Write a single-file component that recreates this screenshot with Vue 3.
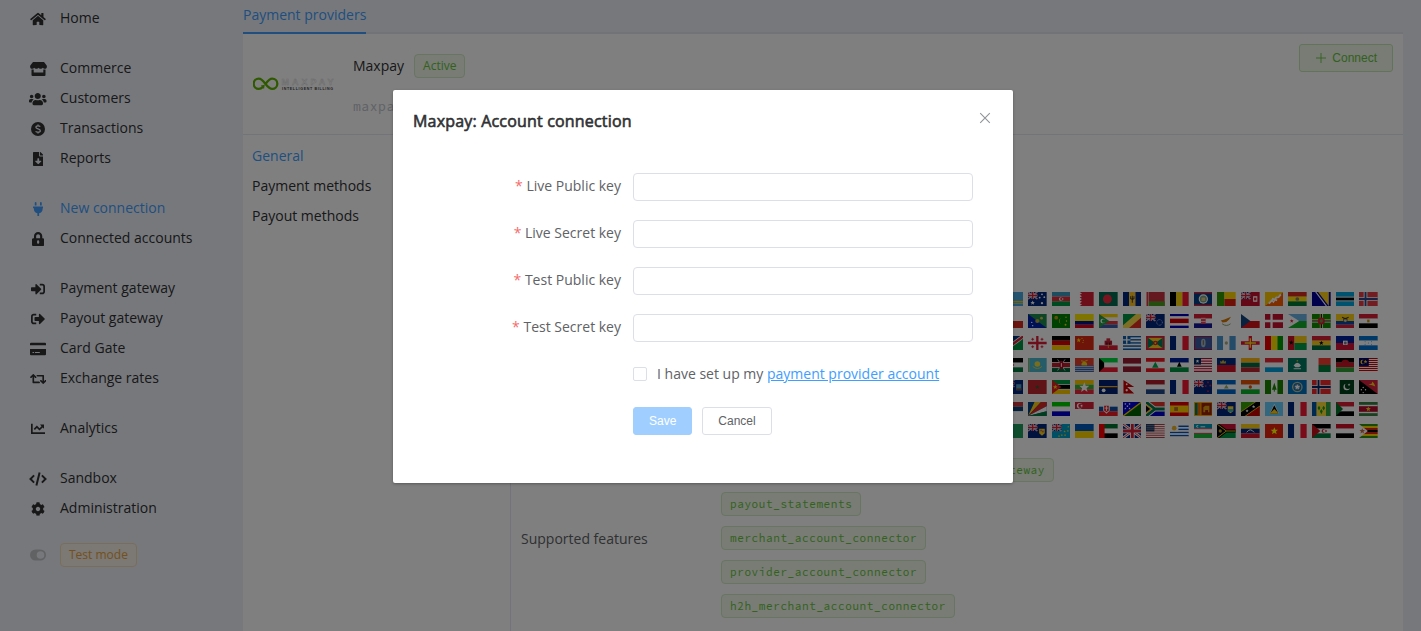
<script setup>
const icons = {
  home: { w: 16, vb: '0 0 576 512', b: '<path d="M280.37 148.26L96 300.11V464a16 16 0 0 0 16 16l112.06-.29a16 16 0 0 0 15.92-16V368a16 16 0 0 1 16-16h64a16 16 0 0 1 16 16v95.64a16 16 0 0 0 16 16.05L464 480a16 16 0 0 0 16-16V300L295.67 148.26a12.19 12.19 0 0 0-15.3 0zM571.6 251.47L488 182.56V44.05a12 12 0 0 0-12-12h-56a12 12 0 0 0-12 12v72.61L318.47 43a48 48 0 0 0-61 0L4.34 251.47a12 12 0 0 0-1.6 16.9l25.5 31A12 12 0 0 0 45.15 301l235.22-193.74a12.19 12.19 0 0 1 15.3 0L530.9 301a12 12 0 0 0 16.9-1.6l25.5-31a12 12 0 0 0-1.7-16.93z"/>' },
  store: { w: 17, vb: '0 0 17 14', b: '<path d="M3 0h11l2.7 3.6c.6 1.500-.2 3.200-1.700 3.200-1.100 0-1.600-.6-2.200-1.100-.6.6-1.200 1.100-2.200 1.100S9.100 6.200 8.500 5.700C7.900 6.200 7.400 6.800 6.400 6.800S4.800 6.300 4.200 5.700C3.600 6.200 3.100 6.800 2 6.800.5 6.800-.3 5.100.3 3.600zM1.500 7.500h2.200v3h9.600v-3h2.200V13a1 1 0 0 1-1 1h-12a1 1 0 0 1-1-1z"/>' },
  users: { w: 17.5, vb: '0 0 640 512', b: '<path d="M96 224c35.3 0 64-28.7 64-64s-28.700-64-64-64-64 28.700-64 64 28.700 64 64 64zm448 0c35.300 0 64-28.700 64-64s-28.700-64-64-64-64 28.700-64 64 28.700 64 64 64zm32 32h-64c-17.600 0-33.500 7.100-45.100 18.600 40.300 22.100 68.900 62 75.100 109.400h66c17.700 0 32-14.300 32-32v-32c0-35.300-28.700-64-64-64zm-256 0c61.900 0 112-50.100 112-112S381.900 32 320 32 208 82.100 208 144s50.100 112 112 112zm76.800 32h-8.300c-20.800 10-43.900 16-68.500 16s-47.600-6-68.500-16h-8.300C179.600 288 128 339.600 128 403.200V432c0 26.500 21.500 48 48 48h288c26.500 0 48-21.500 48-48v-28.800c0-63.600-51.600-115.200-115.200-115.200zm-223.700-13.400C161.500 263.100 145.600 256 128 256H64c-35.300 0-64 28.700-64 64v32c0 17.700 14.300 32 32 32h65.900c6.300-47.400 34.900-87.300 75.200-109.400z"/>' },
  coin: { w: 14, vb: '0 0 14 14', b: '<circle cx="7" cy="7" r="7"/><path d="M9.200 4.700C8.700 4 8 3.900 7 3.900c-1.300 0-2.100.5-2.100 1.400C4.900 7.300 9.300 6.500 9.300 8.700c0 .9-.9 1.500-2.300 1.500-1.100 0-1.900-.3-2.400-.9M7 2.500V4M7 10v1.500" fill="none" stroke="#eff1f8" stroke-width="1.300"/>' },
  file: { w: 10.5, vb: '0 0 384 512', b: '<path d="M224 136V0H24C10.700 0 0 10.700 0 24v464c0 13.300 10.700 24 24 24h336c13.300 0 24-10.700 24-24V160H248c-13.200 0-24-10.800-24-24zm76.450 211.360l-96.420 95.700c-6.650 6.610-17.390 6.610-24.040 0l-96.420-95.700C73.420 337.290 80.540 320 94.820 320H160v-80c0-8.840 7.160-16 16-16h32c8.840 0 16 7.160 16 16v80h65.180c14.280 0 21.400 17.290 11.270 27.360zM377 105L279.100 7c-4.500-4.500-10.600-7-17-7H256v128h128v-6.100c0-6.300-2.500-12.400-7-16.900z"/>' },
  plug: { w: 10.5, vb: '0 0 384 512', b: '<path d="M320 32a32 32 0 0 0-64 0v96h64zm48 128H16A16 16 0 0 0 0 176v32a16 16 0 0 0 16 16h16v32a160.070 160.070 0 0 0 128 156.800V512h64v-99.200A160.070 160.070 0 0 0 352 256v-32h16a16 16 0 0 0 16-16v-32a16 16 0 0 0-16-16zM128 32a32 32 0 0 0-64 0v96h64z"/>' },
  lock: { w: 12.25, vb: '0 0 448 512', b: '<path fill-rule="evenodd" d="M400 224h-24v-72C376 68.200 307.800 0 224 0S72 68.200 72 152v72H48c-26.500 0-48 21.500-48 48v192c0 26.500 21.500 48 48 48h352c26.500 0 48-21.500 48-48V272c0-26.500-21.500-48-48-48zM296 224H152v-72c0-39.700 32.300-72 72-72s72 32.300 72 72zM264 392a40 40 0 0 1-80 0v-48a40 40 0 0 1 80 0z"/>' },
  signin: { w: 14, vb: '0 0 512 512', b: '<path d="M416 448h-84c-6.600 0-12-5.400-12-12v-40c0-6.600 5.400-12 12-12h84c17.700 0 32-14.300 32-32V160c0-17.700-14.300-32-32-32h-84c-6.600 0-12-5.400-12-12V76c0-6.600 5.400-12 12-12h84c53 0 96 43 96 96v192c0 53-43 96-96 96zm-47-201L201 79c-15-15-41-4.500-41 17v96H24c-13.300 0-24 10.700-24 24v96c0 13.300 10.700 24 24 24h136v96c0 21.500 26 32 41 17l168-168c9.300-9.400 9.300-24.600 0-34z"/>' },
  signout: { w: 14, vb: '0 0 512 512', b: '<path d="M497 273L329 441c-15 15-41 4.500-41-17v-96H152c-13.300 0-24-10.700-24-24v-96c0-13.300 10.700-24 24-24h136V88c0-21.400 25.900-32 41-17l168 168c9.300 9.400 9.300 24.600 0 34zM192 436v-40c0-6.600-5.400-12-12-12H96c-17.700 0-32-14.300-32-32V160c0-17.700 14.300-32 32-32h84c6.600 0 12-5.400 12-12V76c0-6.600-5.400-12-12-12H96c-53 0-96 43-96 96v192c0 53 43 96 96 96h84c6.600 0 12-5.400 12-12z"/>' },
  card: { w: 16, vb: '0 0 16 14', b: '<path fill-rule="evenodd" d="M1 .7h14a1 1 0 0 1 1 1v1.600H0V1.700a1 1 0 0 1 1-1zM0 7h16v5.300a1 1 0 0 1-1 1H1a1 1 0 0 1-1-1zM2.500 10v1h1.600v-1zM5 10v1h4.800v-1z"/>' },
  retweet: { w: 16.5, vb: '0 0 640 512', b: '<path d="M629.657 343.598L528.971 444.284c-9.373 9.372-24.568 9.372-33.941 0L394.343 343.598c-9.373-9.373-9.373-24.569 0-33.941l10.823-10.823c9.562-9.562 25.133-9.340 34.419.492L480 342.118V160H292.451a24.005 24.005 0 0 1-16.971-7.029l-16-16C244.361 121.851 255.069 96 276.451 96H520c13.255 0 24 10.745 24 24v222.118l40.416-42.792c9.285-9.831 24.856-10.054 34.419-.492l10.823 10.823c9.372 9.372 9.372 24.569-.001 33.941zm-265.138 15.431A23.999 23.999 0 0 0 347.548 352H160V169.881l40.416 42.792c9.286 9.831 24.856 10.054 34.419.491l10.822-10.822c9.373-9.373 9.373-24.569 0-33.941L144.971 67.716c-9.373-9.373-24.569-9.373-33.941 0L10.343 168.402c-9.373 9.373-9.373 24.569 0 33.941l10.822 10.822c9.562 9.562 25.133 9.340 34.419-.491L96 169.881V392c0 13.255 10.745 24 24 24h243.549c21.382 0 32.090-25.851 16.970-40.971l-16-16z"/>' },
  chart: { w: 14, vb: '0 0 14 14', b: '<path d="M0 1.700h1.700v8.600H14V12H0zM13 2.600v4.100l-1.300-1.300-3.200 3.200-2.600-2.600-2 2-1.200-1.200 3.200-3.200 2.600 2.600 2-2L9 2.600z"/>' },
  code: { w: 18, vb: '0 0 18 14', b: '<path d="M5.100 3.400L1.500 7l3.600 3.600M12.900 3.400L16.500 7l-3.600 3.600M10.600.4L7.400 13.600" fill="none" stroke="currentColor" stroke-width="2"/>' },
  cog: { w: 14, vb: '0 0 512 512', b: '<path d="M487.400 315.700l-42.600-24.600c4.300-23.200 4.300-47 0-70.200l42.600-24.600c4.900-2.800 7.100-8.600 5.500-14-11.100-35.600-30-67.800-54.700-94.600-3.800-4.100-10-5.100-14.800-2.300L380.800 110c-17.900-15.400-38.500-27.300-60.800-35.100V25.800c0-5.600-3.900-10.500-9.400-11.700-36.700-8.200-74.300-7.800-109.200 0-5.500 1.200-9.400 6.100-9.400 11.700V75c-22.200 7.900-42.800 19.800-60.800 35.100L88.700 85.500c-4.900-2.800-11-1.900-14.800 2.300-24.700 26.700-43.600 58.900-54.700 94.600-1.700 5.400.6 11.200 5.500 14L67.300 221c-4.300 23.200-4.300 47 0 70.200l-42.600 24.600c-4.900 2.800-7.100 8.600-5.500 14 11.100 35.600 30 67.800 54.700 94.600 3.800 4.100 10 5.100 14.800 2.300l42.600-24.600c17.900 15.400 38.500 27.300 60.800 35.100v49.200c0 5.600 3.900 10.500 9.400 11.700 36.700 8.200 74.300 7.800 109.200 0 5.500-1.200 9.400-6.100 9.400-11.700v-49.200c22.200-7.900 42.800-19.800 60.800-35.100l42.600 24.600c4.900 2.800 11 1.900 14.800-2.300 24.700-26.700 43.600-58.900 54.700-94.600 1.500-5.500-.7-11.300-5.600-14.100zM256 336c-44.100 0-80-35.900-80-80s35.900-80 80-80 80 35.900 80 80-35.900 80-80 80z"/>' },
}

const menu = [
  [['home', 'Home']],
  [['store', 'Commerce'], ['users', 'Customers'], ['coin', 'Transactions'], ['file', 'Reports']],
  [['plug', 'New connection', true], ['lock', 'Connected accounts']],
  [['signin', 'Payment gateway'], ['signout', 'Payout gateway'], ['card', 'Card Gate'], ['retweet', 'Exchange rates']],
  [['chart', 'Analytics']],
  [['code', 'Sandbox'], ['cog', 'Administration']],
]

// Flag drawing helpers, on a 40x30 canvas
const r = (x, y, w, h, c) => `<rect x="${x}" y="${y}" width="${w}" height="${h}" fill="${c}"/>`
const o = (x, y, q, c) => `<circle cx="${x}" cy="${y}" r="${q}" fill="${c}"/>`
const p = (d, c) => `<path d="${d}" fill="${c}"/>`
const l = (d, c, w) => `<path d="${d}" stroke="${c}" stroke-width="${w}" fill="none"/>`
const bg = (c) => r(0, 0, 40, 30, c)
const h = (...cs) => cs.map((c, i) => r(0, (i * 30) / cs.length, 40, 30 / cs.length, c)).join('')
const v = (...cs) => cs.map((c, i) => r((i * 40) / cs.length, 0, 40 / cs.length, 30, c)).join('')
const tri = (c, x = 18) => p(`M0 0L${x} 15L0 30z`, c)
const star = (x, y, s, c) => p(`M${x} ${y - s}l${s * 0.28} ${s * 0.65}h${s * 0.7}l${-s * 0.55} ${s * 0.5}l${s * 0.2} ${s * 0.75}l${-s * 0.63} ${-s * 0.45}l${-s * 0.63} ${s * 0.45}l${s * 0.2} ${-s * 0.75}l${-s * 0.55} ${-s * 0.5}h${s * 0.7}z`, c)
const W = '#fff', R = '#d81e34', G = '#009543', Y = '#fcd116', K = '#000', N = '#00247d'
const jack = (s = 0.5) => `<g transform="scale(${s})">${bg(N)}${l('M0 0L40 30M40 0L0 30', W, 6)}${l('M0 0L40 30M40 0L0 30', R, 2)}${l('M20 0V30M0 15H40', W, 10)}${l('M20 0V30M0 15H40', R, 6)}</g>`
const cross = (b, c1, c2) => bg(b) + l('M14 0V30M0 15H40', c1, c2 ? 8 : 5) + (c2 ? l('M14 0V30M0 15H40', c2, 4) : '')
const fr = v('#00267f', W, '#f31830')

const flags = [
  // row 1
  bg('#4aa8e0') + r(0, 19, 40, 2, Y) + r(0, 23, 40, 2, Y),
  bg(N) + jack() + star(10, 23, 5, W) + o(30, 5, 2, W) + o(25, 12, 2, W) + o(35, 11, 2, W) + o(30, 24, 2.500, W),
  h('#3f9bc1', '#ed2939', G) + o(19, 15, 4, W) + o(20.500, 15, 3, '#ed2939') + o(23, 15, 1.500, W),
  bg(R) + p('M0 0H10L15 3L10 6L15 9L10 12L15 15L10 18L15 21L10 24L15 27L10 30H0z', W),
  bg('#006a4e') + o(18, 15, 9.500, '#f42a41'),
  v('#00267f', '#ffc726', '#00267f') + l('M20 8V23M16.500 9V15H23.500V9', K, 1.500),
  bg('#c8313e') + r(0, 20, 40, 10, '#4a9b20') + r(0, 0, 6, 30, '#e9aaa5') + l('M3 0V30', R, 2),
  v(K, '#ffd90c', '#f31830'),
  bg('#003f87') + r(0, 0, 40, 3, R) + r(0, 27, 40, 3, R) + o(20, 15, 10, W) + o(20, 15, 7.500, '#7ba68b') + r(16, 12, 8, 7, '#e9c988'),
  r(0, 0, 16, 30, '#319400') + r(16, 0, 24, 15, '#ffd600') + r(16, 15, 24, 15, '#de2110'),
  bg('#c8102e') + jack() + r(26, 9, 9, 12, W) + r(28, 12, 5, 6, R),
  bg('#ff5d00') + p('M0 0H40L0 30z', '#ffc800') + l('M8 25L15 18L18 21L24 12L29 11L34 5M15 14L26 18', W, 4),
  h('#d52b1e', '#ffe000', '#007934') + o(20, 15, 4, '#83805a'),
  bg('#000099') + p('M13 0H36V30z', Y) + l('M8 0L31 30', W, 2.500),
  bg('#00a4dc') + r(0, 10, 40, 10, W) + r(0, 12, 40, 6, K),
  cross('#e43b43', W, '#28468c'),
  // row 2
  r(0, 0, 40, 15, W) + r(0, 15, 40, 15, '#d52b1e') + r(0, 0, 15, 15, '#0039a6'),
  bg('#1d8a4c') + p('M0 0L40 30H0z', '#0021ad') + o(20, 15, 4.500, '#b9a63b') + o(29, 9, 3, '#d9c14a') + o(8, 18, 1.500, W) + o(10, 25, 1.500, W),
  bg('#008000') + o(9, 8, 4, '#c59b22') + p('M21 9a6 6 0 1 0 0 12a4 5 0 1 1 0-12', Y) + o(31, 15, 1.500, Y) + o(29, 23, 2, Y) + o(30, 7, 1.500, Y),
  r(0, 0, 40, 15, '#ffe800') + r(0, 15, 40, 8, '#00148e') + r(0, 23, 40, 7, '#da0010'),
  h('#ffd400', W, '#e2383f', '#3b5aa8') + tri('#239e46', 22) + o(8, 15, 5, W) + o(10, 15, 4, '#239e46'),
  bg('#fbde4a') + p('M0 0H28L0 24z', '#009543') + p('M40 7V30H13z', '#e0301f'),
  bg(N) + jack() + `<circle cx="29" cy="18" r="6" fill="none" stroke="#fff" stroke-width="1.500" stroke-dasharray="1.500"/>`,
  h('#0000b4', W, '#d90000', '#d90000', W, '#0000b4'),
  h(R, W, '#171796') + r(15, 7, 10, 14, '#e44350') + l('M15 10H25M15 16H25', W, 1.500),
  bg(W) + p('M8 14L16 12L30 6L26 12L20 17L12 18z', '#d57800') + l('M11 21Q20 28 29 21', '#7c9b65', 2),
  h(W, '#d7141a') + tri('#11457e', 20),
  cross('#c8102e', W),
  h('#6ab2e7', '#12ad2b') + tri(W, 24) + star(8, 15, 4, R),
  bg('#108c00') + l('M20 0V30M0 15H40', W, 6) + l('M18 0V30M0 13H40', Y, 2) + l('M20 0V30M0 15H40', K, 2.500) + o(20, 15, 7.500, R) + o(20, 15, 3.500, '#5c9b42'),
  r(0, 0, 40, 15, Y) + r(0, 15, 40, 8, '#0748ae') + r(0, 23, 40, 7, R) + o(20, 13, 5, '#75552f') + o(20, 14, 3, '#bdd2bf') + l('M13 7L20 10L27 7', '#43331e', 2.500),
  h(R, W, K) + r(17.500, 12, 5, 6, '#c09300'),
  // row 3
  bg('#009543') + p('M0 0H34L0 25z', '#003580') + p('M40 0H33L0 25V30H7L40 5z', W) + p('M40 0H36L0 27V30H4L40 3z', R),
  bg(W) + l('M20 0V30M0 15H40', R, 5) + l('M10 4V10M7 7H13M30 4V10M27 7H33M10 20V26M7 23H13M30 20V26M27 23H33', R, 2),
  h(K, '#dd0000', '#ffce00'),
  bg('#de2910') + star(8, 9, 5, '#ffde00') + o(15, 5, 1.200, Y) + o(18, 9, 1.200, Y) + o(17, 14, 1.200, Y),
  r(0, 0, 40, 20, W) + r(0, 20, 40, 10, R) + r(12, 10, 16, 9, '#b91d30') + r(16, 5, 8, 6, '#c8283b') + l('M20 19V26', '#dfaa20', 2) + l('M17 14V19M23 14V19', K, 1.500),
  [0, 1, 2, 3, 4, 5, 6, 7, 8].map((i) => r(0, (i * 30) / 9, 40, 3.400, i % 2 ? W : '#0d5eaf')).join('') + r(0, 0, 16, 16.600, '#0d5eaf') + l('M8 0V16.600M0 8.300H16', W, 3),
  bg(R) + r(4, 4, 32, 22, Y) + p('M4 4V26L20 15zM36 4V26L20 15z', '#007a5e') + o(20, 15, 5, R) + star(20, 15, 3, Y),
  fr,
  bg('#be0027') + r(1.500, 1.500, 37, 27, '#3b5aa3') + `<ellipse cx="20" cy="15" rx="5" ry="9" fill="#9fb8c6"/>` + l('M20 9V19', '#7c5a42', 2),
  v('#4997d0', W, '#4997d0') + o(20, 15, 3.500, '#a9ad83'),
  bg(W) + l('M20 0V30M0 15H40', '#e8112d', 7) + l('M20 5V25M8 15H32', '#f9dd16', 3),
  v('#e90000', '#ffe000', '#009a00'),
  r(0, 0, 14, 30, '#ce1126') + r(14, 0, 26, 15, Y) + r(14, 15, 26, 15, '#009e49') + star(7, 14, 5, K),
  h(R, Y, '#006b3f') + star(20, 15, 5, K),
  h('#00209f', '#d21034') + r(15, 10, 10, 9, W) + o(20, 15, 3, '#777c8b'),
  h('#0073cf', W, '#0073cf') + [[20, 15], [13, 12.500], [27, 12.500], [13, 17.500], [27, 17.500]].map((a) => o(a[0], a[1], 1, '#0073cf')).join(''),
  // row 4
  h(K, W, '#007a3d') + tri(R, 20),
  bg('#4bb8d0') + o(20, 13, 6, '#f2db3d') + l('M10 18Q20 27 30 18', '#e3cd47', 2) + l('M3 0V30', '#b7bd4b', 2),
  h(K, '#bb1e2b', '#00633a') + r(0, 9, 40, 1.500, W) + r(0, 20, 40, 1.500, W) + l('M12 3L28 27M28 3L12 27', W, 1.500) + `<ellipse cx="20" cy="15" rx="4.500" ry="9" fill="#b40b22"/>` + r(19, 11, 2, 8, W),
  bg('#e73e2d') + o(20, 14, 6, Y) + r(0, 16, 40, 14, '#315ca8') + l('M0 18H40M0 22H40M0 27H40', W, 1.500) + l('M13 6Q20 9 27 5', Y, 2),
  h('#00d941', W, '#f31830') + p('M0 0L11 10V20L0 30z', K),
  bg('#981e32') + r(0, 12, 40, 6, W),
  bg(W) + r(0, 0, 40, 8, '#ee161f') + r(0, 22, 40, 8, '#ee161f') + p('M20 8L27 21H13z', '#00a850'),
  h('#00209f', W, '#009543') + p('M20 8L25 19H15z', K),
  [0, 1, 2, 3, 4, 5, 6, 7, 8, 9, 10].map((i) => r(0, i * 2.730, 40, 2.800, i % 2 ? W : '#bf0a30')).join('') + r(0, 0, 15, 14, '#002868') + star(7.500, 7, 4, W),
  h('#002b7f', '#ce1126') + p('M7 12V6L10 8L13 4L16 8L19 6V12z', '#c9ad32'),
  h('#fdb913', '#006a44', '#c1272d'),
  h('#ed2939', W, '#00a1de'),
  bg('#00785e') + p('M12 16Q20 4 28 16L24 20H16z', W) + l('M12 23H28', W, 2) + star(20, 6, 2.500, Y),
  r(0, 0, 14, 30, W) + r(14, 0, 26, 15, '#fc3d32') + r(14, 15, 26, 15, '#007e3a'),
  h(K, '#ce1126', '#339e35') + p('M12 10a8 6 0 0 1 16 0z', '#c81120'),
  [0, 1, 2, 3, 4, 5, 6, 7, 8, 9, 10, 11, 12, 13].map((i) => r(0, i * 2.140, 40, 2.200, i % 2 ? W : '#cc0001')).join('') + r(0, 0, 21, 17, '#010066') + o(8, 8.500, 5, Y) + o(10, 8.500, 4, '#010066') + star(14, 8, 4, Y),
  // row 5
  bg(N) + jack() + r(24, 9, 11, 13, '#539bc2') + r(24, 18, 11, 4, '#6f4936'),
  bg('#c1272d') + star(20, 15, 5, '#315c32'),
  h('#009a44', K, '#ffca00') + r(0, 9, 40, 1.500, W) + r(0, 19, 40, 1.500, W) + tri('#e02020', 20) + star(7, 15, 5, Y),
  h('#fecb00', '#34b233', '#ea2839') + star(20, 16, 11, W),
  bg('#002170') + r(0, 13, 40, 2.500, '#ffb20d') + o(10, 22, 4, W),
  bg(W) + p('M1 0L24 15H9L24 29H1z', '#ce0000') + o(8, 9, 2, W) + o(8, 22, 2.500, W),
  h('#ae1c28', W, '#21468b'),
  fr,
  bg(N) + jack() + [[30, 5], [25, 13], [35, 12], [30, 24]].map((a) => star(a[0], a[1], 3, R)).join(''),
  h('#0067c6', W, '#0067c6') + p('M20 10L25 18H15z', '#9caa64'),
  h('#e05206', W, '#0db02b') + o(20, 15, 3.500, '#e05206'),
  v('#198200', W, '#198200') + p('M20 6L25 21H15z', '#198200') + l('M20 20V25', '#198200', 2),
  bg('#0071bc') + `<circle cx="20" cy="15" r="10" fill="none" stroke="#bdbd98" stroke-width="3"/>` + o(20, 15, 6, '#8292a2') + star(20, 15, 6, W),
  cross('#ef2b2d', W, '#002868'),
  bg('#01411c') + r(0, 0, 8, 30, W) + o(23, 15, 7, W) + o(25.500, 13, 6.500, '#01411c') + star(28, 10, 3, W),
  bg('#d4213d') + p('M0 0L40 30H0z', K) + p('M20 9L27 8L29 3L33 9L35 14L28 11z', Y) + [[9, 16], [5, 21], [14, 21], [9, 27]].map((a) => o(a[0], a[1], 1.500, W)).join(''),
  // row 6
  h('#c6363c', '#0c4076', W) + r(7, 6, 10, 14, '#bd3740'),
  bg('#003f87') + p('M0 30L14 0H28z', Y) + p('M0 30L28 0H40V9z', '#d62828') + p('M0 30L40 9V20z', W) + p('M0 30L40 20V30z', '#007a3d'),
  h('#00cd00', W, '#0000cd'),
  h(R, W) + o(10, 8, 6, W) + o(12, 8, 5, R) + o(14, 8, 2, W),
  h(W, '#0b4ea2', '#ee1c25') + p('M9 7H23V18L16 25L9 18z', W) + p('M11 8H21V18L16 22L11 18z', '#ee1c25') + l('M16 9V19M12 13H20', W, 2),
  bg('#0000d6') + p('M40 0V30H0z', '#006000') + l('M0 30L40 0', '#ffce00', 3) + [[5, 4], [14, 4], [9.500, 9], [5, 14], [14, 14]].map((a) => star(a[0], a[1], 2.500, W)).join(''),
  h('#e2322a', W, '#0000c8') + l('M0 0L19 15L0 30M19 15H40', W, 10) + l('M0 0L19 15L0 30M19 15H40', '#007847', 6) + p('M0 5L13 15L0 25z', '#ffb915') + p('M0 8L9 15L0 22z', K),
  bg('#e00000') + r(0, 7.500, 40, 15, '#fc0') + r(9, 11, 8, 8, '#b66b37'),
  bg('#ffb700') + r(2, 2, 6, 26, '#00756b') + r(8, 2, 6, 26, '#e66500') + r(16, 2, 22, 26, '#9c2100') + p('M20 22V11L24 8H33V22H30V17H24V22z', '#dc9a15'),
  bg(N) + jack() + p('M23 9H35V20L29 24L23 20z', '#ffd12f') + r(24, 15, 10, 6, '#2cacc0'),
  bg('#35a100') + p('M40 0V30H0z', '#c70000') + l('M-3 31L43 -1', Y, 14) + l('M-3 31L43 -1', K, 11) + star(13, 19, 3.500, W) + star(27, 10, 3.500, W),
  bg('#65cfff') + p('M20 4L30 25H10z', W) + p('M20 7L29 25H11z', K) + p('M20 15L30 25H10z', Y),
  fr,
  r(0, 0, 10, 30, '#0052a5') + r(10, 0, 20, 30, '#fcde3b') + r(30, 0, 10, 30, '#33a343') + p('M15 8L18 13L15 18L12 13zM25 8L28 13L25 18L22 13zM20 15L23 20L20 26L17 20z', '#199a00'),
  h(R, W, K) + tri('#007229', 15),
  bg('#377e3f') + r(0, 6, 40, 18, W) + r(0, 9, 40, 12, '#b40a2d') + star(20, 15, 5.500, '#ecc81d'),
  // row 7
  bg('#1d9a5c'),
  bg(N) + jack() + p('M24 10H36V20L30 25L24 20z', Y) + o(28, 14, 2, '#ba6b60') + o(32, 16, 2, '#ba6b60'),
  bg('#009fca') + jack() + [[35, 6], [34, 15], [27, 16], [28, 24], [21, 24], [15, 26]].map((a) => star(a[0], a[1], 2.500, Y)).join(''),
  h('#005bbb', '#ffd500'),
  h('#00732f', W, K) + r(0, 0, 12, 30, '#ff0000'),
  jack(1),
  [0, 1, 2, 3, 4, 5, 6, 7, 8, 9, 10, 11, 12].map((i) => r(0, i * 2.310, 40, 2.400, i % 2 ? W : '#bd3d44')).join('') + r(0, 0, 18, 16, '#192f5d') + l('M1 3H18M1 7H18M1 11H18', '#8794a9', 1.500),
  [0, 1, 2, 3, 4, 5, 6, 7, 8].map((i) => r(0, (i * 30) / 9, 40, 3.400, i % 2 ? '#0052c0' : W)).join('') + r(0, 0, 18, 16, W) + o(9, 9, 5, '#e8b52d'),
  h('#0099b5', W, '#1eb53a') + r(0, 9.500, 40, 1.500, R) + r(0, 19, 40, 1.500, R) + o(8, 5, 3, W) + o(10, 5, 2.500, '#0099b5') + l('M14 6H24', W, 2),
  h('#d21034', '#009543') + tri(K, 22) + l('M0 0L20 15H40M0 30L20 15', K, 6) + l('M0 0L20 15H40M0 30L20 15', Y, 2) + o(7, 15, 3.500, '#ba9f28'),
  h('#fcd116', '#00247d', '#cf142b') + l('M12 18Q20 7 28 18', W, 2),
  bg('#e9230c') + star(20, 15, 8, '#ff0'),
  fr,
  h(K, W, '#007a3d') + tri('#c4111b', 18) + o(25, 15, 4.500, R) + o(27, 15, 3.500, W) + star(30, 15, 3, R),
  h('#ce1126', W, K),
  h('#319208', '#ffd200', '#de2010', K, '#de2010', '#ffd200', '#319208') + p('M0 0L19 15L0 30z', W) + star(7, 15, 6, '#c66b3d'),
]

const fields = ['Live Public key', 'Live Secret key', 'Test Public key', 'Test Secret key']
const features = ['payout_statements', 'merchant_account_connector', 'provider_account_connector', 'h2h_merchant_account_connector']
</script>

<template>
  <div class="page">
    <aside class="sidebar">
      <nav v-for="(group, gi) in menu" :key="gi" class="group">
        <a v-for="item in group" :key="item[1]" class="item" :class="{ active: item[2] }">
          <span class="ico"><svg :width="icons[item[0]].w" height="14" :viewBox="icons[item[0]].vb" fill="currentColor" v-html="icons[item[0]].b"></svg></span>
          <span>{{ item[1] }}</span>
        </a>
      </nav>
      <div class="mode">
        <span class="ico">
          <svg width="16" height="12" viewBox="0 0 16 12"><rect y=".5" width="16" height="11" rx="5.500" fill="#c3c4c6" /><circle cx="10.500" cy="6" r="3.800" fill="#eff1f8" /></svg>
        </span>
        <span class="tag warning">Test mode</span>
      </div>
    </aside>

    <main class="main">
      <div class="tabs"><span class="tab">Payment providers</span></div>
      <section class="card">
        <header class="head">
          <svg class="logo" width="82" height="16" viewBox="0 0 82 16">
            <path d="M12.500 8C10 4.500 8 2.600 5.800 2.600a5 5 0 0 0 0 10.300c1.600 0 2.900-.7 4.200-2M12.500 8C15 4.500 17 2.600 19.200 2.600a5 5 0 0 1 0 10.300C16.500 12.900 14.500 10.500 12.500 8z" fill="none" stroke="#5fb300" stroke-width="2.300" />
            <path d="M7.800 9.500L11.800 8.800L11 13z" fill="#5fb300" />
            <text x="28.500" y="9" textLength="52" class="brand">MAXPAY</text>
            <text x="29" y="13.500" textLength="51" class="slogan">INTELLIGENT BILLING</text>
          </svg>
          <div class="ident">
            <div class="name">Maxpay <span class="tag">Active</span></div>
            <div class="code">maxpay</div>
          </div>
          <button class="btn connect">
            <svg width="12" height="12" viewBox="0 0 12 12"><path d="M6 1V11M1 6H11" stroke="currentColor" stroke-width=".9" /></svg>
            <span>Connect</span>
          </button>
        </header>
        <div class="body">
          <nav class="subnav">
            <a class="active">General</a>
            <a>Payment methods</a>
            <a>Payout methods</a>
          </nav>
          <div class="detail">
            <div class="flags">
              <svg v-for="(f, i) in flags" :key="i" viewBox="0 0 40 30" preserveAspectRatio="none" v-html="f"></svg>
            </div>
            <div class="features">
              <span class="label">Supported features</span>
              <div class="tags">
                <div class="first"><span class="tag mono">payout_gateway</span></div>
                <span v-for="f in features" :key="f" class="tag mono">{{ f }}</span>
              </div>
            </div>
          </div>
        </div>
      </section>
    </main>

    <div class="overlay">
      <div class="dialog">
        <header class="dhead">
          <h1>Maxpay: Account connection</h1>
          <svg width="16" height="16" viewBox="0 0 16 16"><path d="M3.200 3.200L12.800 12.800M12.800 3.200L3.200 12.800" stroke="#909399" stroke-width="1.100" /></svg>
        </header>
        <form class="form" @submit.prevent>
          <label v-for="f in fields" :key="f" class="field">
            <span class="flabel"><i>*</i> {{ f }}</span>
            <input type="text" />
          </label>
          <div class="check"><span class="box"></span><span>I have set up my <a>payment provider account</a></span></div>
          <div class="actions">
            <button class="btn save">Save</button>
            <button class="btn">Cancel</button>
          </div>
        </form>
      </div>
    </div>
  </div>
</template>

<style>
body { margin: 0; overflow: hidden; }
</style>

<style scoped>
.page { position: relative; display: flex; width: 1421px; height: 631px; overflow: hidden; background: #eff1f8; color: #303133; font: 14px/30px "Open Sans", sans-serif; }
.sidebar { width: 243px; flex: none; box-sizing: border-box; padding-top: 3px; }
.group { display: flex; flex-direction: column; margin-bottom: 20px; }
.item { display: flex; height: 30px; }
.active { color: #409eff; }
.ico { width: 44px; margin-left: 16px; height: 32px; display: flex; align-items: center; justify-content: center; flex: none; }
.mode { display: flex; align-items: center; height: 32px; margin-top: -4px; }
.tag { display: inline-block; box-sizing: border-box; height: 24px; padding: 0 8px; font-size: 12px; line-height: 22px; border: 1px solid #d0eac4; border-radius: 4px; background: #f0f9eb; color: #67c23a; white-space: nowrap; }
.tag.warning { color: #e6a23c; background: #f8f1e9; border-color: #f3dcb9; }
.tag.mono { font-family: "Source Code Pro", "DejaVu Sans Mono", monospace; font-size: 11px; letter-spacing: .6px; }
.main { width: 1160px; flex: none; }
.tabs { height: 34px; box-sizing: border-box; border-bottom: 2px solid #e4e7ed; display: flex; }
.tab { height: 34px; box-sizing: border-box; border-bottom: 2px solid #409eff; color: #409eff; }
.card { background: #fff; height: 597px; }
.head { height: 101px; box-sizing: border-box; border-bottom: 1px solid #e6e8f0; display: flex; padding: 10px 10px 0; }
.logo { flex: none; margin-top: 32px; }
.brand { font: bold 9px "Liberation Sans", sans-serif; fill: #fff; stroke: #d4d4d4; stroke-width: .4px; }
.slogan { font: bold 3.6px "Liberation Sans", sans-serif; fill: #444; }
.ident { flex: 1; margin-left: 18px; }
.name { height: 44px; line-height: 44px; display: flex; align-items: center; gap: 10px; }
.code { font-family: "Source Code Pro", "DejaVu Sans Mono", monospace; font-size: 13px; letter-spacing: .57px; line-height: 20px; margin-top: 9px; color: #c0c4cc; }
.btn { box-sizing: border-box; height: 28px; padding: 0 15px; font: 12px/26px "Liberation Sans", Arial, sans-serif; border: 1px solid #dcdfe6; border-radius: 3px; background: #fff; color: #606266; display: flex; align-items: center; }
.connect { color: #67c23a; background: #f0f9eb; border-color: #c2e7b0; gap: 5px; }
.body { display: flex; height: 496px; }
.subnav { width: 268px; flex: none; box-sizing: border-box; border-right: 1px solid #e6e8f5; padding: 6px 0 0 9px; display: flex; flex-direction: column; }
.detail { flex: 1; padding: 157px 25px 0 10px; }
.flags { display: grid; grid-template-columns: repeat(16, 18.67px); gap: 8px 5px; justify-content: end; }
.flags svg { width: 18.67px; height: 14px; display: block; }
.features { display: flex; align-items: center; margin-top: 20px; color: #606266; }
.label { width: 200px; line-height: 20px; padding-top: 2px; }
.tags { display: flex; flex-direction: column; align-items: flex-start; gap: 10px; }
.first { width: 333px; display: flex; justify-content: flex-end; }
.overlay { position: absolute; inset: 0; background: rgba(0, 0, 0, .5); }
.dialog { width: 620px; height: 393px; margin: 90px auto 0 393px; box-sizing: border-box; background: #fff; border-radius: 2px; box-shadow: 0 1px 3px rgba(0, 0, 0, .3); color: #606266; }
.dhead { display: flex; justify-content: space-between; padding: 20px 20px 0; height: 83px; box-sizing: border-box; }
h1 { margin: 0; font-size: 16px; line-height: 23px; height: 23px; font-weight: 400; letter-spacing: .18px; color: #303133; -webkit-text-stroke: .6px #303133; }
.form { width: 580px; display: flex; flex-direction: column; }
.field { display: flex; height: 28px; margin-bottom: 19px; line-height: 26px; }
.flabel { width: 228px; text-align: right; margin-right: 12px; }
.flabel i { font-style: normal; color: #f56c6c; }
input { width: 340px; height: 28px; box-sizing: border-box; border: 1px solid #dcdfe6; border-radius: 4px; background: #fff; padding: 0 15px; }
.check { display: flex; align-items: center; height: 28px; margin: -1px 0 19px 240px; gap: 10px; line-height: 26px; }
.box { width: 14px; height: 14px; box-sizing: border-box; border: 1px solid #dcdfe6; border-radius: 2px; }
.check a { color: #409eff; text-decoration: underline; }
.actions { display: flex; gap: 10px; margin-left: 240px; }
.save { background: #a0cfff; border-color: #a0cfff; color: #fff; }
</style>
